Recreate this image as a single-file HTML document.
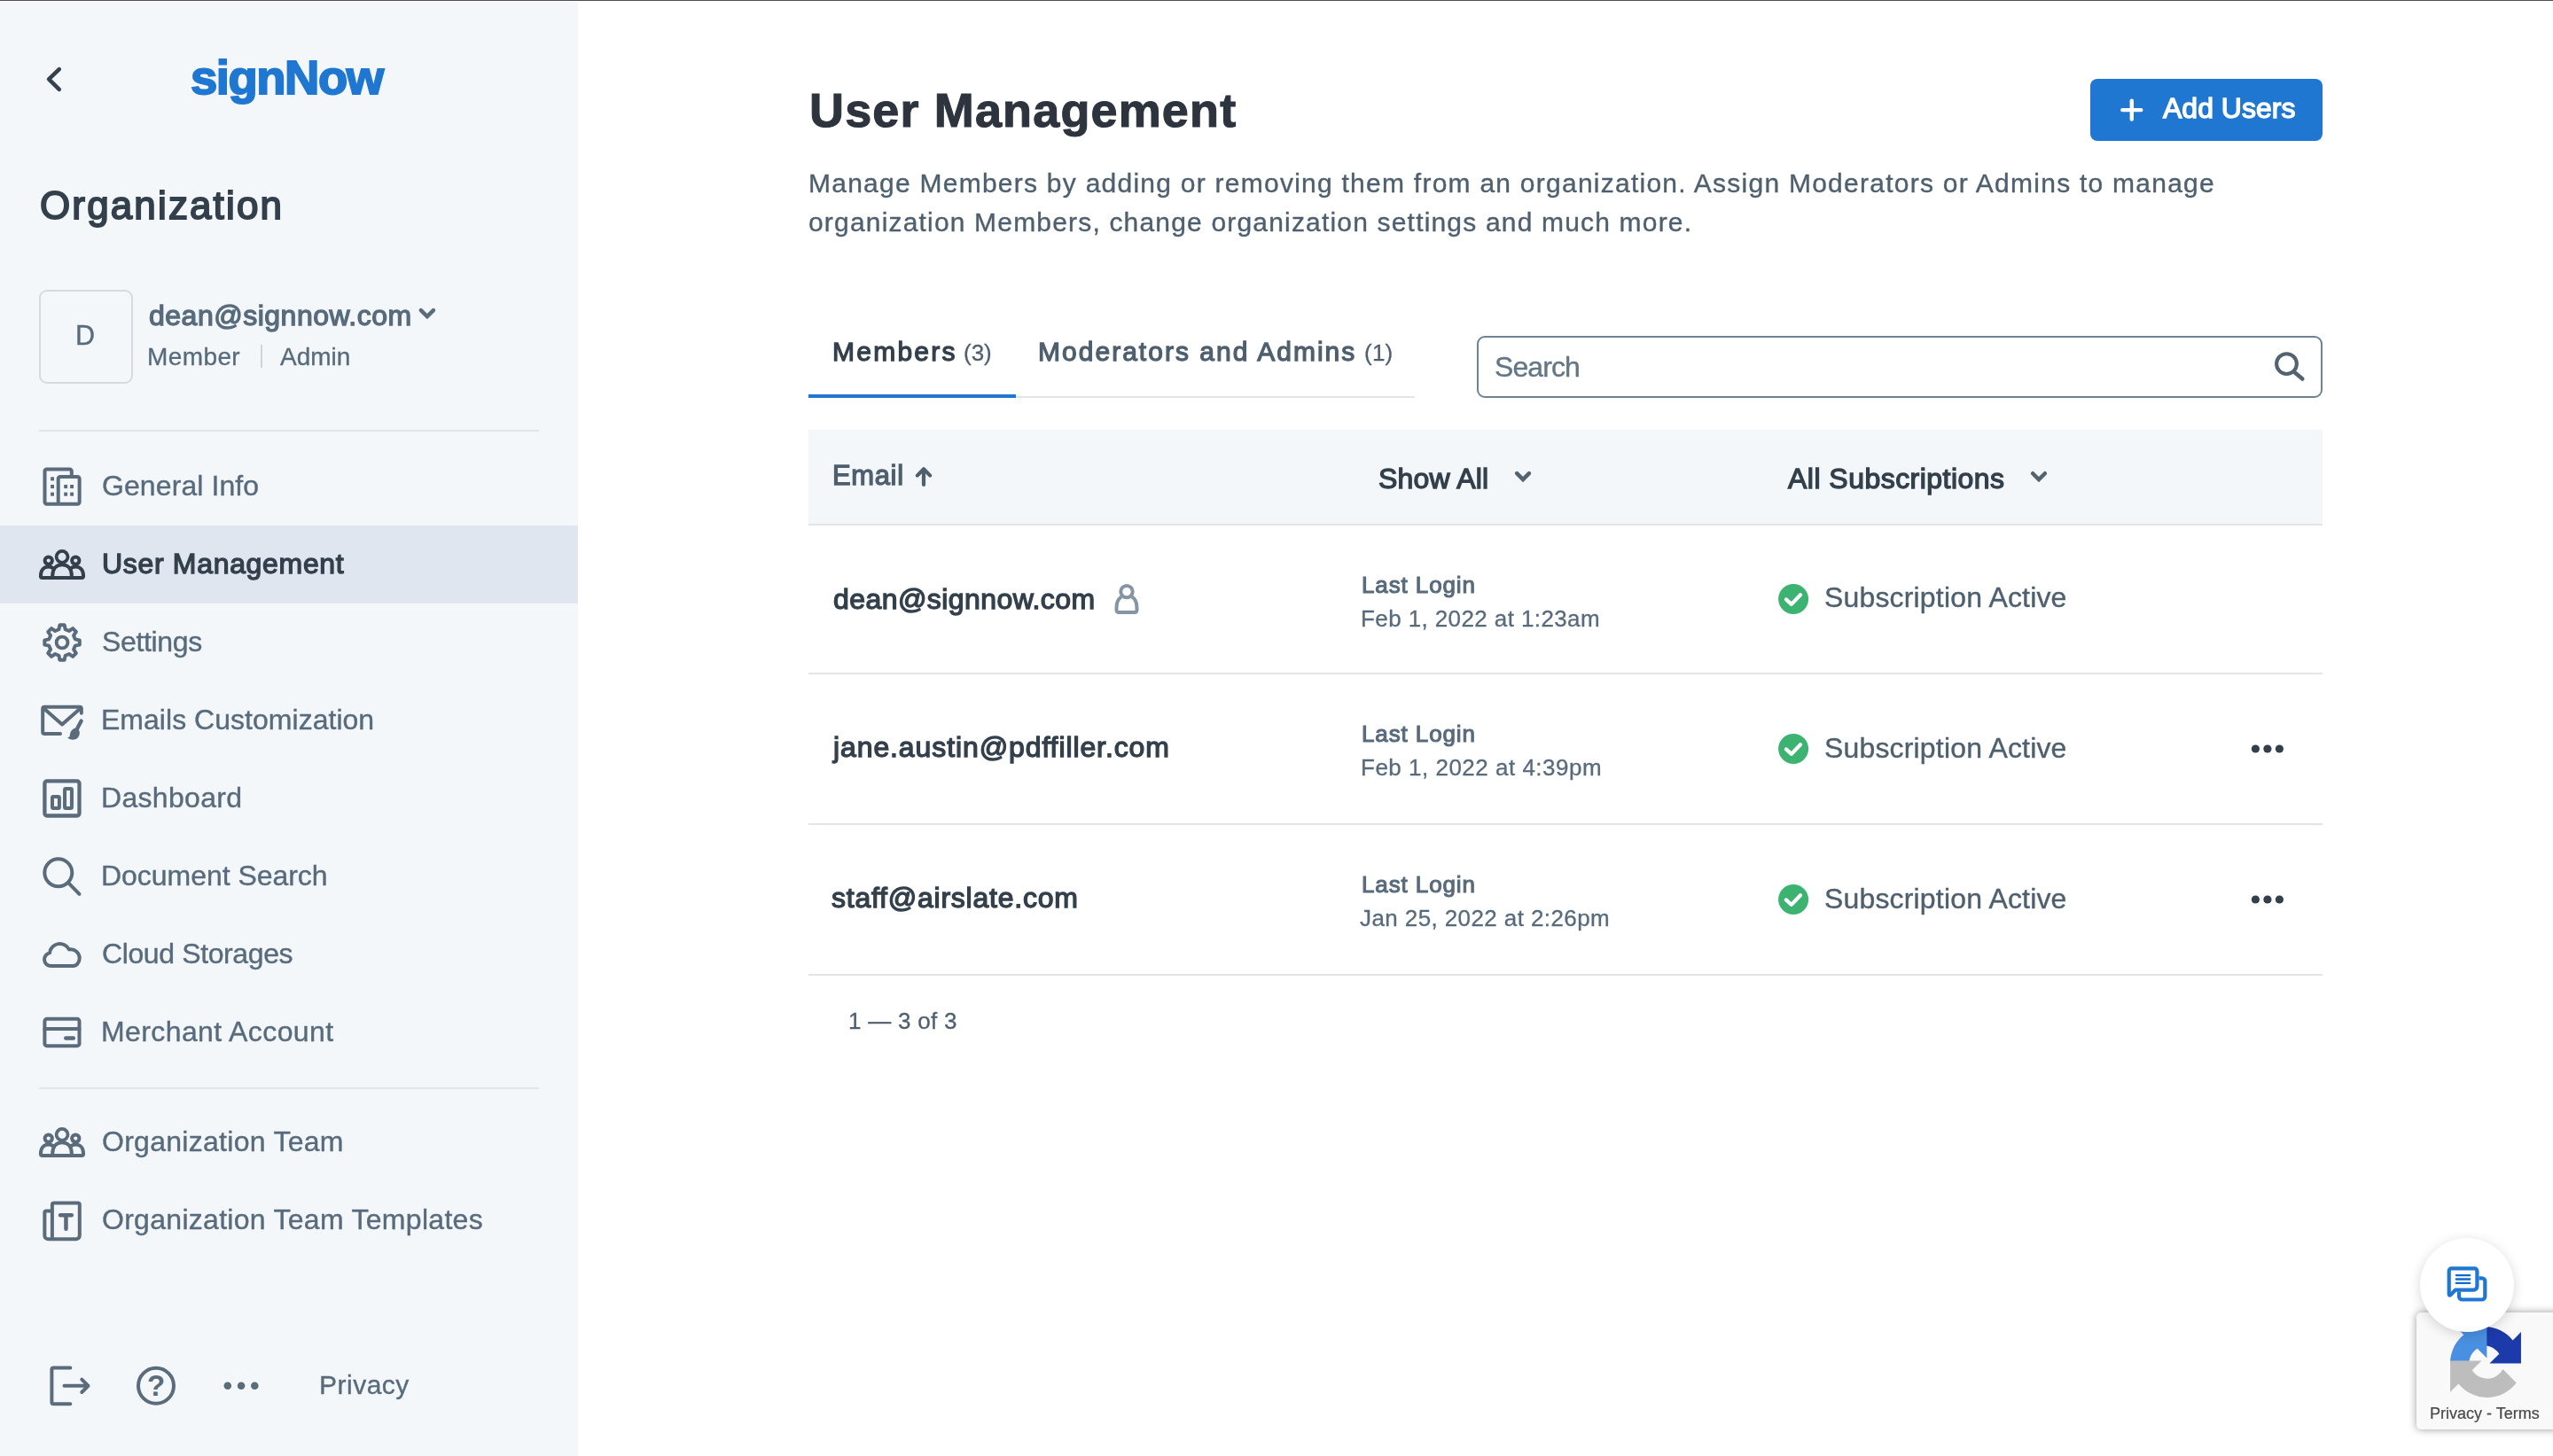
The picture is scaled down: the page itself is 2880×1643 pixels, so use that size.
<!DOCTYPE html>
<html lang="en">
<head>
<meta charset="utf-8">
<title>User Management - signNow</title>
<style>
*{box-sizing:border-box;margin:0;padding:0}
html,body{width:2880px;height:1643px;overflow:hidden;background:#fff}
body{position:relative;font-family:"Liberation Sans",sans-serif;color:#33404c}
.abs{position:absolute}
svg{position:absolute;overflow:visible}
.t{position:absolute;white-space:nowrap;line-height:1;will-change:transform}
.t.r{-webkit-text-stroke:0.012em currentColor}
.t.s{-webkit-text-stroke:0.042em currentColor}
.t.l{font-weight:bold;-webkit-text-stroke:0.036em currentColor}
.t.b{font-weight:bold;-webkit-text-stroke:0.02em currentColor}
#side{position:absolute;left:0;top:0;width:652px;height:1643px;background:#f4f7fa}
#topline{position:absolute;left:0;top:0;width:2880px;height:2px;background:#fff;border-top:1px solid #4b4e53}
.hr{position:absolute;left:44px;width:564px;height:2px;background:#e0e5ea}
.act{position:absolute;left:0;top:593px;width:652px;height:88px;background:#e0e6ef}
.ni{left:44px;width:52px;height:52px}
.ic{fill:none;stroke:#5a6b7b;stroke-width:4;stroke-linecap:round;stroke-linejoin:round}
.icd{fill:none;stroke:#33404c;stroke-width:4;stroke-linecap:round;stroke-linejoin:round}
.ln{position:absolute;left:912px;width:1708px;height:2px;background:#e1e5ea}
</style>
</head>
<body>
<div id="side"></div>
<div class="act"></div>

<!-- back arrow -->
<svg style="left:40px;top:60px;width:40px;height:60px" viewBox="40 60 40 60"><path d="M66.760 78.100 L55.100 89.450 L66.760 100.800" fill="none" stroke="#35414d" stroke-width="4.600" stroke-linecap="round" stroke-linejoin="round"/></svg>

<!-- avatar -->
<div class="abs" style="left:44px;top:327px;width:106px;height:106px;border:2px solid #d5dae0;border-radius:9px"></div>
<svg style="left:466px;top:340px;width:32px;height:32px" viewBox="466 340 32 32"><path d="M474.850 350.100 L481.900 357.150 L488.950 350.100" fill="none" stroke="#5a6b7b" stroke-width="4.500" stroke-linecap="round" stroke-linejoin="miter"/></svg>
<div class="abs" style="left:294px;top:389px;width:2px;height:26px;background:#cdd5dc"></div>
<div class="hr" style="top:485px"></div>
<div class="hr" style="top:1227px"></div>

<!-- nav icons -->
<svg class="ni" style="top:523px" viewBox="0 0 52 52"><path class="ic" stroke-width="4.200" d="M36.800 15.100 V8.600 a2.200 2.200 0 0 0 -2.200 -2.200 H8.700 a2.200 2.200 0 0 0 -2.200 2.200 V43.500 a2.200 2.200 0 0 0 2.200 2.200 H43.450 a2.200 2.200 0 0 0 2.200 -2.200 V17.300 a2.200 2.200 0 0 0 -2.200 -2.200 H23.900 a2.200 2.200 0 0 0 -2.200 2.200 V45.670"/><g fill="#5a6b7b"><rect x="13.100" y="15.300" width="3.900" height="4.100"/><rect x="13.100" y="24" width="3.900" height="4.100"/><rect x="13.100" y="32.600" width="3.900" height="4.100"/><rect x="28.200" y="24" width="3.900" height="4.100"/><rect x="35.100" y="24" width="3.900" height="4.100"/><rect x="28.200" y="32.600" width="3.900" height="4.100"/><rect x="35.100" y="32.600" width="3.900" height="4.100"/></g></svg>

<svg class="ni" style="top:611px" viewBox="0 0 52 52"><g class="icd"><circle cx="26.060" cy="17.350" r="6.450" stroke-width="3.800"/><circle cx="10.730" cy="21.600" r="4.150"/><circle cx="41.300" cy="21.600" r="4.150"/><path d="M15.200 40.900 V39 C15.200 31 19.500 26.200 26.060 26.200 C32.600 26.200 36.900 31 36.900 39 V40.900"/><path d="M16.800 31 C15.200 29.400 13.100 28.500 10.700 28.500 C5.500 28.500 1.900 32.500 1.900 39 a1.900 1.900 0 0 0 1.900 1.900 H48.200 a1.900 1.900 0 0 0 1.900 -1.900 C50.100 32.500 46.500 28.500 41.300 28.500 C38.900 28.500 36.800 29.400 35.200 31"/></g></svg>

<svg class="ni" style="top:699px" viewBox="0 0 52 52"><g class="ic" stroke-width="4.300"><circle cx="26.060" cy="26" r="6.400" stroke-width="3.900"/><path d="M22.40 11.25 L23.41 6.28 L28.71 6.28 L29.72 11.25 L33.90 12.98 L38.13 10.18 L41.88 13.93 L39.08 18.16 L40.81 22.34 L45.78 23.35 L45.78 28.65 L40.81 29.66 L39.08 33.84 L41.88 38.07 L38.13 41.82 L33.90 39.02 L29.72 40.75 L28.71 45.72 L23.41 45.72 L22.40 40.75 L18.22 39.02 L13.99 41.82 L10.24 38.07 L13.04 33.84 L11.31 29.66 L6.34 28.65 L6.34 23.35 L11.31 22.34 L13.04 18.16 L10.24 13.93 L13.99 10.18 L18.22 12.98 Z"/></g></svg>

<svg class="ni" style="top:787px" viewBox="0 0 52 52"><g class="ic"><path d="M24 41.100 H6.200 a2 2 0 0 1 -2 -2 V12.850 a2 2 0 0 1 2 -2 H45.850 a2 2 0 0 1 2 2 V17.700"/><path d="M5.600 12.400 L26.060 30.600 L46.500 12.400"/><path d="M47.700 26.600 L42.900 35.600" stroke-width="4.300"/></g><path d="M44.700 36.300 C46.300 38.600 46.200 42 44.500 44.500 C42.500 47.600 38 48.700 34.500 47.100 C33.300 46.500 32.400 45.700 32 45 C33.600 45.400 34.600 44.600 34.800 43 C35 38.500 37.500 35 42.300 34.200 Z" fill="#5a6b7b"/></svg>

<svg class="ni" style="top:875px" viewBox="0 0 52 52"><g class="ic"><rect x="6.400" y="6.400" width="39.100" height="39.100" rx="2.600" stroke-width="4.300"/><rect x="15" y="24.050" width="7.900" height="12.900" rx="1.200"/><rect x="29.050" y="14.950" width="7.900" height="22" rx="1.200"/></g></svg>

<svg class="ni" style="top:963px" viewBox="0 0 52 52"><g class="ic"><circle cx="21.800" cy="21.800" r="15.500"/><path d="M32.800 32.800 L45.500 45.800"/></g></svg>

<svg class="ni" style="top:1051px" viewBox="0 0 52 52"><path class="ic" d="M13.500 39.070 A7.400 7.400 0 0 1 12.050 24.400 A11.500 11.500 0 0 1 33.900 20.500 C40.500 19.500 45.700 24 45.700 30.300 C45.700 35.200 42.300 39.070 38.500 39.070 Z"/></svg>

<svg class="ni" style="top:1139px" viewBox="0 0 52 52"><g class="ic" stroke-width="4.200"><rect x="6.400" y="10.850" width="39.100" height="30.300" rx="2.400"/><path d="M6.400 21.900 H45.500"/><path d="M30.300 32.500 H38.800" stroke-width="4.500"/></g></svg>

<svg class="ni" style="top:1263px" viewBox="0 0 52 52"><g class="ic"><circle cx="26.060" cy="17.350" r="6.450" stroke-width="3.800"/><circle cx="10.730" cy="21.600" r="4.150"/><circle cx="41.300" cy="21.600" r="4.150"/><path d="M15.200 40.900 V39 C15.200 31 19.500 26.200 26.060 26.200 C32.600 26.200 36.900 31 36.900 39 V40.900"/><path d="M16.800 31 C15.200 29.400 13.100 28.500 10.700 28.500 C5.500 28.500 1.900 32.500 1.900 39 a1.900 1.900 0 0 0 1.900 1.900 H48.200 a1.900 1.900 0 0 0 1.900 -1.900 C50.100 32.500 46.500 28.500 41.300 28.500 C38.900 28.500 36.800 29.400 35.200 31"/></g></svg>

<svg class="ni" style="top:1351px" viewBox="0 0 52 52"><g class="ic" stroke-width="4.300"><path d="M14.900 47.350 V8.550 a2 2 0 0 1 2 -2 H43.800 a2 2 0 0 1 2 2 V43.350 a4 4 0 0 1 -4 4 H10.550 a4.200 4.200 0 0 1 -4.200 -4.200 V17.450 a2 2 0 0 1 2 -2 H14.900"/><path d="M24 20.300 H36.800 M30.450 20.300 V35.700" stroke-width="4.500"/></g></svg>

<!-- bottom icons -->
<svg style="left:40px;top:1530px;width:280px;height:70px" viewBox="40 1530 280 70"><g class="ic"><path d="M79.300 1543.500 H60.400 a2 2 0 0 0 -2 2 V1582.200 a2 2 0 0 0 2 2 H79.300"/><path d="M72.500 1563.800 H99.500 M92.300 1556.600 L99.500 1563.800 L92.300 1571"/><circle cx="176" cy="1563.800" r="20"/></g><text x="176" y="1574.600" text-anchor="middle" font-family="Liberation Sans, sans-serif" font-weight="bold" font-size="33" fill="#5a6b7b">?</text><g fill="#5a6b7b"><circle cx="256.800" cy="1563.800" r="4.300"/><circle cx="272.100" cy="1563.800" r="4.300"/><circle cx="287.300" cy="1563.800" r="4.300"/></g></svg>

<!-- main -->
<div class="abs" style="left:2358px;top:89px;width:262px;height:70px;background:#1f77d1;border-radius:8px"></div>
<svg style="left:2385px;top:104px;width:40px;height:40px" viewBox="2385 104 40 40"><path d="M2404.800 113.600 V134.600 M2394.300 124.100 H2415.300" stroke="#fff" stroke-width="4.400" stroke-linecap="round"/></svg>

<div class="abs" style="left:912px;top:447px;width:684px;height:2px;background:#e1e5ea"></div>
<div class="abs" style="left:912px;top:445px;width:234px;height:4px;background:#1f77d1"></div>

<div class="abs" style="left:1666px;top:379px;width:954px;height:70px;border:2px solid #6e8292;border-radius:9px;background:#fff"></div>
<svg style="left:2560px;top:392px;width:46px;height:46px" viewBox="2560 392 46 46"><circle cx="2579.500" cy="410.600" r="11.400" fill="none" stroke="#52636f" stroke-width="4.100"/><path d="M2587.400 419.300 L2597.300 427.600" stroke="#52636f" stroke-width="4.600" stroke-linecap="round"/></svg>

<div class="abs" style="left:912px;top:485px;width:1708px;height:106px;background:#f4f7fa"></div>
<div class="ln" style="top:591px"></div>
<div class="ln" style="top:759px"></div>
<div class="ln" style="top:929px"></div>
<div class="ln" style="top:1099px"></div>

<svg style="left:1025px;top:520px;width:34px;height:36px" viewBox="1025 520 34 36"><path d="M1042 547 V530 M1034.800 536.600 L1042 529.300 L1049.200 536.600" fill="none" stroke="#4e5f6e" stroke-width="4.200" stroke-linecap="round" stroke-linejoin="round"/></svg>
<svg style="left:1700px;top:525px;width:36px;height:26px" viewBox="1700 525 36 26"><path d="M1711.150 534.150 L1718.050 541.050 L1724.950 534.150" fill="none" stroke="#52636f" stroke-width="4.500" stroke-linecap="round" stroke-linejoin="miter"/></svg>
<svg style="left:2282px;top:525px;width:36px;height:26px" viewBox="2282 525 36 26"><path d="M2293.100 534.250 L2300 541.150 L2306.900 534.250" fill="none" stroke="#52636f" stroke-width="4.500" stroke-linecap="round" stroke-linejoin="miter"/></svg>

<!-- user icon row1 -->
<svg style="left:1250px;top:650px;width:44px;height:52px" viewBox="1250 650 44 52"><g fill="none" stroke="#8595a3" stroke-width="4" stroke-linejoin="round"><circle cx="1271" cy="667.600" r="6.700"/><path d="M1265.200 673.500 c-3.700 2 -5.700 6.500 -5.700 12.600 v2.500 a2.500 2.500 0 0 0 2.500 2.500 h18 a2.500 2.500 0 0 0 2.500 -2.500 v-2.500 c0 -6.100 -2 -10.600 -5.700 -12.600"/></g></svg>

<!-- status checks -->
<svg style="left:2000px;top:655px;width:46px;height:400px" viewBox="2000 655 46 400"><g id="ck"><circle cx="2023.100" cy="676" r="17" fill="#3cb371"/><path d="M2014.900 676.400 L2020.900 681.900 L2031 671.300" fill="none" stroke="#fff" stroke-width="4.200" stroke-linecap="round" stroke-linejoin="round"/></g><use href="#ck" y="169"/><use href="#ck" y="339"/></svg>

<!-- row menus -->
<svg style="left:2530px;top:830px;width:60px;height:200px" viewBox="2530 830 60 200"><g fill="#33404c"><circle cx="2544.400" cy="845" r="4.600"/><circle cx="2557.900" cy="845" r="4.600"/><circle cx="2571.400" cy="845" r="4.600"/><circle cx="2544.400" cy="1015" r="4.600"/><circle cx="2557.900" cy="1015" r="4.600"/><circle cx="2571.400" cy="1015" r="4.600"/></g></svg>

<!-- recaptcha badge -->
<div class="abs" style="left:2726px;top:1481px;width:170px;height:132px;background:#f9f9f9;border-radius:5px;box-shadow:0 0 10px rgba(0,0,0,.4)"></div>
<svg style="left:2763px;top:1497px;width:82px;height:80px" viewBox="0 0 64 64"><defs><clipPath id="cA"><rect x="31.500" y="-3" width="36" height="36.500"/></clipPath><clipPath id="cB"><rect x="-3" y="-3" width="35.500" height="36.500"/></clipPath></defs><path clip-path="url(#cA)" d="M64 31.955a32.100 32.100 0 0 0 -.04 -1.430 V3.560 l-7.453 7.453 C50.407 3.547 41.127 -1.220 30.733 -1.220 c-10.817 0 -20.427 5.163 -26.502 13.160 l12.217 12.345 a16.210 16.210 0 0 1 4.949 -5.555 c2.134 -1.666 5.158 -3.028 9.335 -3.028 c.505 0 .894 .059 1.180 .170 c5.176 .408 9.662 3.265 12.304 7.410 l-8.648 8.648 c10.954 -.043 23.328 -.068 28.431 .005" fill="#1c3aa9" transform="translate(0,1.300)"/><path clip-path="url(#cB)" d="M31.862 .001 a32.300 32.300 0 0 0 -1.431 .04 H3.467 l7.453 7.453 C3.453 13.595 -1.313 22.875 -1.313 33.270 c0 10.816 5.163 20.426 13.160 26.501 l12.345 -12.217 a16.210 16.210 0 0 1 -5.555 -4.949 c-1.665 -2.134 -3.028 -5.158 -3.028 -9.335 c0 -.505 .059 -.894 .170 -1.180 c.408 -5.176 3.265 -9.662 7.410 -12.304 l8.648 8.648 c-.043 -10.954 -.068 -23.328 .005 -28.431" fill="#4a90e2" transform="translate(1.300,0)"/><path d="M.001 32.045 c.001 .479 .014 .956 .04 1.430 v26.965 l7.453 -7.453 c6.101 7.466 15.381 12.233 25.775 12.233 c10.817 0 20.427 -5.163 26.502 -13.160 L47.554 39.715 a16.210 16.210 0 0 1 -4.949 5.555 c-2.134 1.666 -5.158 3.028 -9.335 3.028 c-.505 0 -.894 -.059 -1.180 -.170 c-5.176 -.408 -9.662 -3.265 -12.304 -7.410 l8.648 -8.648 c-10.954 .043 -23.328 .068 -28.431 -.005" fill="#bdbdbd" transform="translate(0,-1.300)"/></svg>

<!-- chat bubble -->
<div class="abs" style="left:2730px;top:1397px;width:106px;height:106px;border-radius:53px;background:#fff;box-shadow:0 3px 14px rgba(0,0,0,.16)"></div>
<svg style="left:2755px;top:1424px;width:56px;height:50px" viewBox="2755 1424 56 50"><g fill="none" stroke="#1f77d1" stroke-width="4.200" stroke-linejoin="round"><path d="M2796.500 1442.300 H2799.800 a3.500 3.500 0 0 1 3.500 3.500 V1463 a3.500 3.500 0 0 1 -3.500 3.500 H2777.500 a3.500 3.500 0 0 1 -3.500 -3.500 V1457.500"/><path d="M2765.500 1431.400 H2791.400 a3 3 0 0 1 3 3 V1451.600 a4 4 0 0 1 -4 4 H2770 L2764.200 1461.400 a.900 .900 0 0 1 -1.500 -.700 V1434.200 a2.800 2.800 0 0 1 2.800 -2.800 z" fill="#fff"/></g><path d="M2770.800 1439.100 H2786.200 M2770.800 1443.500 H2786.200 M2770.800 1447.900 H2786.200" stroke="#1069cb" stroke-width="2.300" stroke-linecap="round"/></svg>

<div class="t l" id="logo" style="left:214.60px;top:61.21px;font-size:54.5px;color:#1f77d1;letter-spacing:-1.500px">signNow</div>
<div class="t s" id="org" style="left:45.00px;top:209.80px;font-size:44px;color:#33404c;letter-spacing:2.136px">Organization</div>
<div class="t r" id="avD" style="left:85.40px;top:362.91px;font-size:30.5px;color:#586b7c">D</div>
<div class="t s" id="uemail" style="left:167.80px;top:339.81px;font-size:32px;color:#586b7c;letter-spacing:0.500px">dean@signnow.com</div>
<div class="t r" id="role1" style="left:165.80px;top:388.50px;font-size:28px;color:#586b7c;letter-spacing:0.400px">Member</div>
<div class="t r" id="role2" style="left:315.80px;top:388.50px;font-size:28px;color:#586b7c">Admin</div>
<div class="t r" id="n0" style="left:114.60px;top:532.21px;font-size:32px;color:#586b7c;letter-spacing:0.091px">General Info</div>
<div class="t s" id="n1" style="left:115.00px;top:620.21px;font-size:32px;color:#33404c;letter-spacing:0.679px">User Management</div>
<div class="t r" id="n2" style="left:114.60px;top:708.21px;font-size:32px;color:#586b7c;letter-spacing:-0.357px">Settings</div>
<div class="t r" id="n3" style="left:113.80px;top:796.21px;font-size:32px;color:#586b7c;letter-spacing:0.026px">Emails Customization</div>
<div class="t r" id="n4" style="left:113.80px;top:884.21px;font-size:32px;color:#586b7c;letter-spacing:0.312px">Dashboard</div>
<div class="t r" id="n5" style="left:113.80px;top:972.21px;font-size:32px;color:#586b7c;letter-spacing:-0.036px">Document Search</div>
<div class="t r" id="n6" style="left:114.60px;top:1060.21px;font-size:32px;color:#586b7c;letter-spacing:-0.385px">Cloud Storages</div>
<div class="t r" id="n7" style="left:113.60px;top:1148.21px;font-size:32px;color:#586b7c;letter-spacing:0.400px">Merchant Account</div>
<div class="t r" id="n8" style="left:114.60px;top:1272.21px;font-size:32px;color:#586b7c;letter-spacing:0.281px">Organization Team</div>
<div class="t r" id="n9" style="left:114.60px;top:1360.21px;font-size:32px;color:#586b7c;letter-spacing:0.288px">Organization Team Templates</div>
<div class="t r" id="priv" style="left:360.00px;top:1548.00px;font-size:30px;color:#586b7c;letter-spacing:0.500px">Privacy</div>
<div class="t b" id="title" style="left:912.80px;top:96.71px;font-size:54px;color:#2d343e;letter-spacing:1.143px">User Management</div>
<div class="t s" id="addtxt" style="left:2440.40px;top:105.91px;font-size:32px;color:#ffffff">Add Users</div>
<div class="t r" id="desc1" style="left:911.80px;top:191.51px;font-size:30px;color:#4e5f6e;letter-spacing:1.250px">Manage Members by adding or removing them from an organization. Assign Moderators or Admins to manage</div>
<div class="t r" id="desc2" style="left:911.80px;top:235.60px;font-size:30px;color:#4e5f6e;letter-spacing:1.180px">organization Members, change organization settings and much more.</div>
<div class="t s" id="tab1" style="left:939.00px;top:381.50px;font-size:30px;color:#33404c;letter-spacing:2.250px">Members</div>
<div class="t r" id="tab1n" style="left:1087.40px;top:384.51px;font-size:26px;color:#4e5f6e">(3)</div>
<div class="t s" id="tab2" style="left:1171.20px;top:381.50px;font-size:30px;color:#4e5f6e;letter-spacing:2.025px">Moderators and Admins</div>
<div class="t r" id="tab2n" style="left:1538.60px;top:384.51px;font-size:26px;color:#4e5f6e;letter-spacing:0.250px">(1)</div>
<div class="t r" id="search" style="left:1686.20px;top:398.31px;font-size:32px;color:#627686;letter-spacing:-0.900px">Search</div>
<div class="t s" id="thEmail" style="left:938.80px;top:520.81px;font-size:31px;color:#4e5f6e;letter-spacing:0.625px">Email</div>
<div class="t s" id="thShow" style="left:1555.40px;top:523.81px;font-size:32px;color:#33404c;letter-spacing:0.214px">Show All</div>
<div class="t s" id="thSubs" style="left:2016.60px;top:523.51px;font-size:32px;color:#33404c;letter-spacing:0.469px">All Subscriptions</div>
<div class="t s" id="e1" style="left:939.60px;top:659.91px;font-size:32px;color:#33404c;letter-spacing:0.433px">dean@signnow.com</div>
<div class="t s" id="ll1" style="left:1536.40px;top:646.91px;font-size:26px;color:#586b7c;letter-spacing:0.889px">Last Login</div>
<div class="t r" id="ld1" style="left:1535.40px;top:684.61px;font-size:26px;color:#586b7c;letter-spacing:0.400px">Feb 1, 2022 at 1:23am</div>
<div class="t r" id="s1" style="left:2058.00px;top:657.81px;font-size:32px;color:#4e5f6e;letter-spacing:0.167px">Subscription Active</div>
<div class="t s" id="e2" style="left:940.40px;top:827.21px;font-size:32px;color:#33404c;letter-spacing:0.896px">jane.austin@pdffiller.com</div>
<div class="t s" id="ll2" style="left:1536.40px;top:814.71px;font-size:26px;color:#586b7c;letter-spacing:0.889px">Last Login</div>
<div class="t r" id="ld2" style="left:1535.40px;top:852.61px;font-size:26px;color:#586b7c;letter-spacing:0.500px">Feb 1, 2022 at 4:39pm</div>
<div class="t r" id="s2" style="left:2058.00px;top:827.86px;font-size:32px;color:#4e5f6e;letter-spacing:0.167px">Subscription Active</div>
<div class="t s" id="e3" style="left:938.40px;top:997.21px;font-size:32px;color:#33404c;letter-spacing:0.765px">staff@airslate.com</div>
<div class="t s" id="ll3" style="left:1536.40px;top:984.71px;font-size:26px;color:#586b7c;letter-spacing:0.889px">Last Login</div>
<div class="t r" id="ld3" style="left:1533.60px;top:1022.61px;font-size:26px;color:#586b7c;letter-spacing:0.405px">Jan 25, 2022 at 2:26pm</div>
<div class="t r" id="s3" style="left:2058.00px;top:997.86px;font-size:32px;color:#4e5f6e;letter-spacing:0.167px">Subscription Active</div>
<div class="t r" id="pag" style="left:957.00px;top:1138.91px;font-size:26px;color:#4e5f6e;letter-spacing:0.278px">1 — 3 of 3</div>
<div class="t r" id="rtxt" style="left:2740.60px;top:1585.81px;font-size:18px;color:#4a4a4a">Privacy - Terms</div>
<div id="topline"></div>
</body>
</html>
